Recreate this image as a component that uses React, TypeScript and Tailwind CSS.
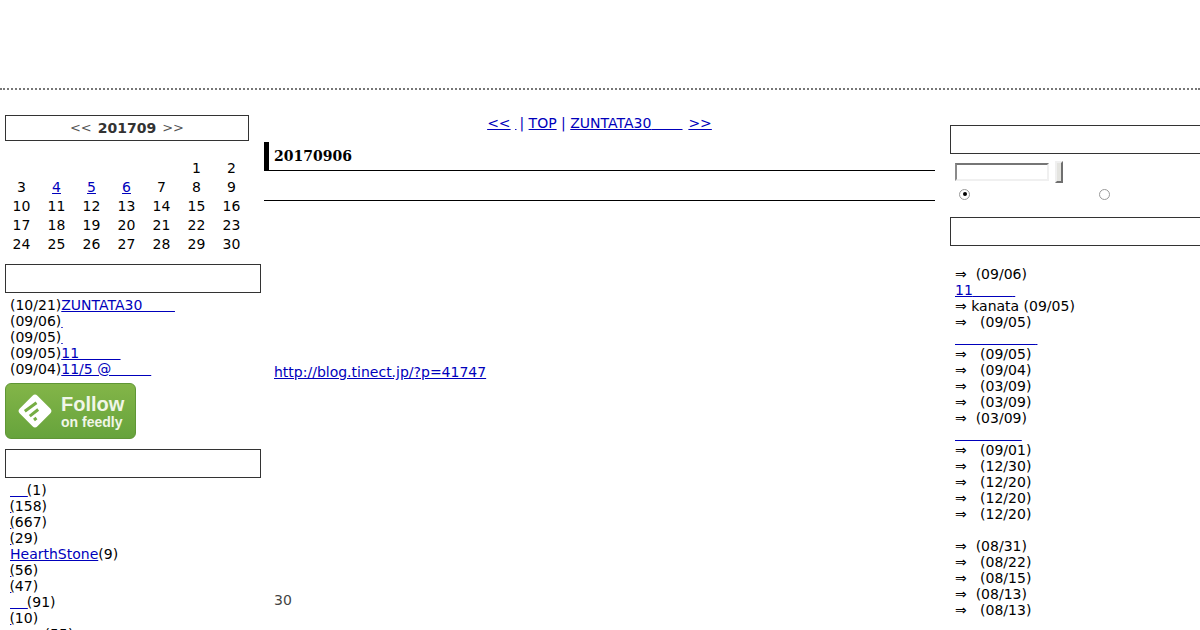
import React from 'react';

const rows = [
  ['', '', '', '', '', '1', '2'],
  ['3', '4', '5', '6', '7', '8', '9'],
  ['10', '11', '12', '13', '14', '15', '16'],
  ['17', '18', '19', '20', '21', '22', '23'],
  ['24', '25', '26', '27', '28', '29', '30'],
];

const recent = [
  { date: '(10/21)', link: 'ZUNTATA30' + '\u00a0'.repeat(7) + '\u200a' },
  { date: '(09/06)', link: '\u200a' },
  { date: '(09/05)', link: '\u200a' },
  { date: '(09/05)', link: '11' + '\u00a0'.repeat(9) + '\u200a' },
  { date: '(09/04)', link: '11/5 @' + '\u00a0'.repeat(9) },
];

const cats = [
  { link: '\u00a0\u00a0\u00a0\u00a0', n: '(1)', gap: '-mr-px' },
  { link: '\u200a', n: '(158)', gap: '-mr-[2px]' },
  { link: '\u200a', n: '(667)', gap: '-mr-[2px]' },
  { link: '\u200a', n: '(29)', gap: '-mr-[2px]' },
  { link: 'HearthStone', n: '(9)', gap: '' },
  { link: '\u200a', n: '(56)', gap: '-mr-[2px]' },
  { link: '\u200a', n: '(47)', gap: '-mr-[2px]' },
  { link: '\u00a0\u00a0\u00a0\u00a0', n: '(91)', gap: '-mr-px' },
  { link: '\u200a', n: '(10)', gap: '-mr-[2px]' },
  { link: '\u00a0'.repeat(8), n: '(55)', gap: '-mr-px' },
];

const wide = '\u21d2 \u00a0\u00a0';
const narrow = '\u21d2 \u00a0';

function Box() {
  return <div className="h-[29px] border border-[#333333]" />;
}

function Blue({ children, className = '' }: { children: React.ReactNode; className?: string }) {
  return <a className={`text-[#0000bb] underline ${className}`}>{children}</a>;
}

function FeedlyButton() {
  return (
    <div className="flex h-14 w-[131px] items-center rounded-md border border-[#5f9636] bg-gradient-to-b from-[#83b548] to-[#66a33c] pl-[10px]">
      <svg width="38" height="38" viewBox="0 0 38 38">
        <rect x="6.5" y="6.5" width="25" height="25" rx="3.5" fill="#ffffff" transform="rotate(45 19 19)" />
        <path d="M8.8 19.2 L20.5 10.8 M13.8 24.2 L22.2 17.5 M18 28 L20.5 26" stroke="#76ad43" strokeWidth="3" />
      </svg>
      <div className="ml-[7px] flex flex-col font-['Liberation_Sans',sans-serif] font-bold text-[#f0f6e8]">
        <span className="text-[20px] leading-[22px]">Follow</span>
        <span className="text-[14px] leading-[14px]">on feedly</span>
      </div>
    </div>
  );
}

export default function App() {
  return (
    <div className="h-[630px] w-[1200px] overflow-hidden bg-white font-['DejaVu_Sans',sans-serif] text-[14px] leading-4 text-black">
      <div className="h-[90px] border-b-2 border-dotted border-[#777777]" />
      <div className="flex items-start pt-[25px]">
        {/* left column */}
        <div className="ml-[5px] w-[256px] shrink-0">
          <div className="flex h-[26px] w-[244px] items-center justify-center gap-[6px] border border-[#333333] text-[#333333]">
            <span className="text-[13px] text-[#555555]">&lt;&lt;</span>
            <span className="font-bold">201709</span>
            <span className="text-[13px] text-[#555555]">&gt;&gt;</span>
          </div>
          <div className="-ml-px mt-[17px] grid w-[245px] grid-cols-7">
            {rows.flat().map((d, i) => (
              <div key={i} className="flex h-[19px] items-center justify-center">
                {d === '4' || d === '5' || d === '6' ? <Blue>{d}</Blue> : d}
              </div>
            ))}
          </div>
          <div className="mt-[11px]">
            <Box />
          </div>
          <ul className="mt-1 pl-[5px]">
            {recent.map((r, i) => (
              <li key={i} className="h-4">
                {r.date}
                <Blue>{r.link}</Blue>
              </li>
            ))}
          </ul>
          <div className="mt-[6px]">
            <FeedlyButton />
          </div>
          <div className="mt-[10px]">
            <Box />
          </div>
          <ul className="mt-1 pl-[5px]">
            {cats.map((c, i) => (
              <li key={i} className="h-4">
                <Blue className={c.gap}>{c.link}</Blue>
                {c.n}
              </li>
            ))}
          </ul>
        </div>

        {/* main column */}
        <div className="ml-[3px] w-[671px] shrink-0">
          <div className="h-[27px] text-center text-[#0000bb]">
            <a className="underline">&lt;&lt;</a> <a className="-mr-[1.5px] underline">{'\u200a'}</a> | <a className="underline">TOP</a> | <a className="underline">ZUNTATA30{'\u00a0'.repeat(7)}</a> {'\u200a'}<a className="underline">&gt;&gt;</a>
          </div>
          <h2 className="flex h-[29px] items-center border-b border-l-[5px] border-black pl-[5px] font-['DejaVu_Serif',serif] text-[14px] font-bold">
            20170906
          </h2>
          <div className="h-[30px] border-b border-black" />
          <p className="mt-[163px] pl-[10px]">
            <Blue>http://blog.tinect.jp/?p=41747</Blue>
          </p>
          <p className="mt-[212px] pl-[10px] text-[#444444]">30</p>
        </div>

        {/* right column */}
        <div className="ml-[15px] w-[256px] shrink-0 pt-[10px]">
          <Box />
          <div className="mt-[7px] flex h-[22px] items-center pl-[5px]">
            <div className="h-[18px] w-[94px] border-2 border-b-[#f0f0f0] border-l-[#8a8a8a] border-r-[#f0f0f0] border-t-[#767676] bg-white" />
            <div className="ml-[6px] h-[22px] w-2 border-2 border-b-[#6f6f6f] border-l-[#f0f0f0] border-r-[#6f6f6f] border-t-[#f0f0f0] bg-[#e4e4e0]" />
          </div>
          <div className="mt-[5px] flex h-[12px] items-center pl-[9px]">
            <span className="flex h-[11px] w-[11px] items-center justify-center rounded-full border border-[#9a9a9a] bg-white">
              <span className="h-1 w-1 rounded-full bg-black" />
            </span>
            <span className="ml-[129px] h-[11px] w-[11px] rounded-full border border-[#9a9a9a] bg-white" />
          </div>
          <div className="mt-[17px]">
            <Box />
          </div>
          <ul className="mt-[20px] pl-[5px]">
            <li className="h-4">{narrow}(09/06)</li>
            <li className="h-4"><Blue>11{'\u00a0'.repeat(9)}{'\u2006'}</Blue></li>
            <li className="h-4">{'\u21d2'} kanata (09/05)</li>
            <li className="h-4">{wide}(09/05)</li>
            <li className="h-4"><Blue>{'\u00a0'.repeat(18)}{'\u2006'}</Blue></li>
            <li className="h-4">{wide}(09/05)</li>
            <li className="h-4">{wide}(09/04)</li>
            <li className="h-4">{wide}(03/09)</li>
            <li className="h-4">{wide}(03/09)</li>
            <li className="h-4">{narrow}(03/09)</li>
            <li className="h-4"><Blue>{'\u00a0'.repeat(15)}</Blue></li>
            <li className="h-4">{wide}(09/01)</li>
            <li className="h-4">{wide}(12/30)</li>
            <li className="h-4">{wide}(12/20)</li>
            <li className="h-4">{wide}(12/20)</li>
            <li className="h-4">{wide}(12/20)</li>
            <li className="h-4" />
            <li className="h-4">{narrow}(08/31)</li>
            <li className="h-4">{wide}(08/22)</li>
            <li className="h-4">{wide}(08/15)</li>
            <li className="h-4">{narrow}(08/13)</li>
            <li className="h-4">{wide}(08/13)</li>
          </ul>
        </div>
      </div>
    </div>
  );
}
